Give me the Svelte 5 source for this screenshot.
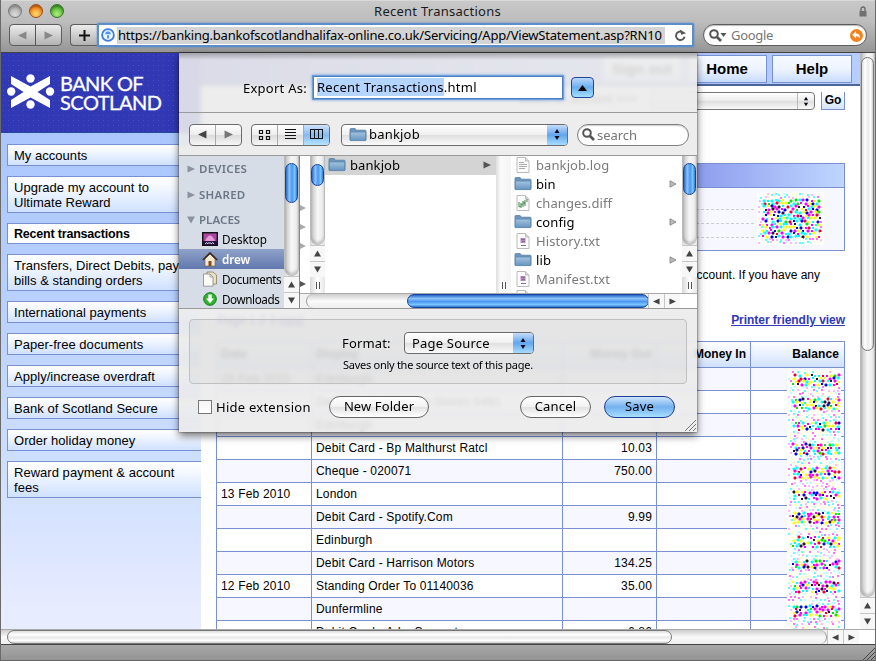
<script>
  const menu = [
    ['My accounts'],
    ['Upgrade my account to', 'Ultimate Reward'],
    ['Recent transactions'],
    ['Transfers, Direct Debits, pay', 'bills & standing orders'],
    ['International payments'],
    ['Paper-free documents'],
    ['Apply/increase overdraft'],
    ['Bank of Scotland Secure'],
    ['Order holiday money'],
    ['Reward payment & account', 'fees']
  ];

  const rows = [
    ['15 Feb 2010', 'Edinburgh', ''],
    ['', 'Debit Card - Amazon Stores 5491', ''],
    ['', 'Edinburgh', ''],
    ['', 'Debit Card - Bp Malthurst Ratcl', '10.03'],
    ['', 'Cheque - 020071', '750.00'],
    ['13 Feb 2010', 'London', ''],
    ['', 'Debit Card - Spotify.Com', '9.99'],
    ['', 'Edinburgh', ''],
    ['', 'Debit Card - Harrison Motors', '134.25'],
    ['12 Feb 2010', 'Standing Order To 01140036', '35.00'],
    ['', 'Dunfermline', ''],
    ['', 'Debit Card - Arke Support', '6.86']
  ];

  const files = [
    ['bankjob.log', 'log'],
    ['bin', 'folder'],
    ['changes.diff', 'diff'],
    ['config', 'folder'],
    ['History.txt', 'txt'],
    ['lib', 'folder'],
    ['Manifest.txt', 'txt'],
    ['PostInstall.txt', 'txt']
  ];

  // Halftone-like speckle used to mask private figures
  const strong = ['#00ffff', '#ff00ff', '#ffff00', '#00ffff', '#ff00ff', '#ffff00', '#0000f0', '#f00030', '#10e010', '#00ffff', '#ff00ff', '#ffff00', '#00ffff', '#ff00ff', '#1010c0', '#301030'];
  const weak = ['#ffb8ff', '#b8ffff', '#ffffc0', '#ff70ff', '#60ffff', '#ffffe0'];
  function speckle(w, h, dense, seed) {
    let s = seed;
    const rnd = () => (s = (s * 16807) % 2147483647) / 2147483647;
    const dots = [];
    for (let row = 0, y = 1; y < h - 2; y += 3, row++) {
      for (let x = 1 + (row % 2) * 2; x < w - 2; x += 4) {
        const on = dense(x, y);
        if (rnd() < (on ? 0.06 : 0.1)) continue;
        const set = on ? strong : weak;
        dots.push({
          x: Math.min(w - 3, x + Math.floor(rnd() * 2)),
          y: Math.min(h - 3, y + Math.floor(rnd() * 2)),
          big: on && rnd() < 0.55,
          c: set[Math.floor(rnd() * set.length)]
        });
      }
    }
    return dots;
  }
  const boxDots = speckle(67, 53, (x, y) => x > 4 && x < 62 && y > 4 && y < 46, 4711);
  const colDots = speckle(54, 262, (x, y) => x > 4 && y % 23 > 3 && y % 23 < 15, 977);
</script>

{#snippet tri(dir, size = 8, fill = '#444')}
  <svg width={size} height={size} viewBox="0 0 8 8" class="tri">
    {#if dir === 'l'}<path d="M7.5 0.5v7L0 4z" {fill} />
    {:else if dir === 'r'}<path d="M.5 .5v7L8 4z" {fill} />
    {:else if dir === 'u'}<path d="M0 7.500h8L4 .5z" {fill} />
    {:else}<path d="M0 .5h8L4 7.500z" {fill} />{/if}
  </svg>
{/snippet}

{#snippet vscroll(start, thumb, color, grip)}
  <div class="vs">
    <div class="vtrack">
      <div class="vgap" style="height:{start}px"></div>
      <div class="vthumb {color}" style="height:{thumb}px"></div>
    </div>
    <div class="sbtn">{@render tri('u', 7)}</div>
    <div class="sbtn">{@render tri('d', 7)}</div>
    {#if grip}<div class="grip"><i></i><i></i></div>{/if}
  </div>
{/snippet}

{#snippet folder()}
  <svg width="18" height="16" viewBox="0 0 18 16">
    <defs><linearGradient id="fg" x2="0" y2="1"><stop offset="0" stop-color="#a5c4e0" /><stop offset="1" stop-color="#6594bf" /></linearGradient></defs>
    <path d="M1 13V2.500q0-.9.9-.9h4.300l1.200 1.600h8.700q.9 0 .9.900V13z" fill="#6f97bb" stroke="#527da5" stroke-width=".8" />
    <path d="M1.300 5h15.400v8.600H1.300z" fill="url(#fg)" stroke="#5b87ae" stroke-width=".8" />
  </svg>
{/snippet}

{#snippet lens(arrow)}
  <svg width={arrow ? 18 : 13} height="13" viewBox="0 0 {arrow ? 18 : 13} 13">
    <circle cx="5" cy="5" r="3.800" fill="none" stroke="#555" stroke-width="2" />
    <path d="M8 8l4 4" stroke="#555" stroke-width="2.600" />
    {#if arrow}<path d="M11.500 4h6l-3 4z" fill="#555" />{/if}
  </svg>
{/snippet}

{#snippet stepper()}
  <span class="step"><svg width="8" height="13" viewBox="0 0 8 13"><path d="M4 1L6.500 5h-5zM4 12L1.500 8h5z" fill="#080818" /></svg></span>
{/snippet}

{#snippet dots(w, h, list)}
  <svg class="speckle" width={w} height={h} viewBox="0 0 {w} {h}" shape-rendering="crispEdges">
    <rect width={w} height={h} fill="#fff" />
    {#each list as d}
      {#if d.big}<path d="M{d.x} {d.y - 1}h2v1h1v2h-1v1h-2v-1h-1v-2h1z" fill={d.c} opacity=".45" />{/if}
      <rect x={d.x} y={d.y} width="2" height="2" fill={d.c} />
    {/each}
  </svg>
{/snippet}

<div class="window">
  <div class="chrome">
    <div class="titlebar">
      <div class="lights"><b class="grey"></b><b class="amber"></b><b class="green"></b></div>
      <span class="title">Recent Transactions</span>
      <svg class="lock" width="8" height="11" viewBox="0 0 8 11"><path d="M2 5V3a2 2 0 0 1 4 0v2" fill="none" stroke="#666" stroke-width="1.300" /><rect x=".5" y="5" width="7" height="5.500" rx=".6" fill="#707070" /></svg>
    </div>
    <div class="toolbar">
      <div class="tb pair"><span>{@render tri('l', 9, '#888')}</span><span>{@render tri('r', 9, '#888')}</span></div>
      <div class="tb plus"><svg width="11" height="11" viewBox="0 0 11 11"><path d="M5.500 0v11M0 5.500h11" stroke="#111" stroke-width="2" /></svg></div>
      <div class="url">
        <svg width="14" height="14" viewBox="0 0 14 14"><circle cx="7" cy="7" r="5.900" fill="#eaf4ff" stroke="#3b7bea" stroke-width="1.800" /><path d="M4.300 6.200V4.800Q7 1.600 9.700 4.800v1.400zM6 7.200h2v3.200H6z" fill="#4e97f5" /></svg>
        <span class="addr">https://banking.bankofscotlandhalifax-online.co.uk/Servicing/App/ViewStatement.asp?RN10</span>
        <svg class="reload" width="13" height="13" viewBox="0 0 13 13"><path d="M10.500 7.800A4.300 4.300 0 1 1 8 2.800" fill="none" stroke="#555" stroke-width="1.900" /><path d="M6.500 0v5.500h5z" fill="#555" transform="rotate(-18 8 3)" /></svg>
      </div>
      <div class="google">
        {@render lens(true)}<span>Google</span>
        <svg width="13" height="13" viewBox="0 0 13 13"><circle cx="6.500" cy="6.500" r="6.500" fill="#f58220" /><path d="M6 2.200v2.200q4.300 0 4 5-1-2.300-4-2.200v2.200L2.200 5.800z" fill="#fff" /></svg>
      </div>
    </div>
  </div>

  <div class="viewport">
    <div class="page">
      <div class="left">
        <div class="brand">
          <svg width="48" height="36" viewBox="0 0 48 36" fill="#fff">
            <path d="M4 2l19.500 10.500L43 2v8L30.500 18 43 26v8L23.500 23.500 4 34v-8l12.500-8L4 10z" />
            <circle cx="23.500" cy="4.500" r="4.200" /><circle cx="23.500" cy="30.500" r="4.200" /><circle cx="4.200" cy="17.500" r="4.200" /><circle cx="43" cy="17.500" r="4.200" />
          </svg>
          <div class="bname"><div class="b1">BANK OF</div><div class="b2">SCOTLAND</div></div>
        </div>
        <div class="menu">
          {#each menu as lines, i}
            <div class="item" class:active={i === 2}>{#each lines as l}<div>{l}</div>{/each}</div>
          {/each}
        </div>
      </div>
      <div class="main">
        <div class="topnav"><span>Sign out</span><span>Home</span><span>Help</span></div>
        <div class="jump">
          <span class="jl">Select an account &gt;&gt;&gt;</span>
          <span class="select">{@render stepper()}</span><span class="go">Go</span>
        </div>
        <div class="infobox">
          <div class="ihead"></div>
          <div class="ibody"><div class="dash"><i></i><i></i><i></i></div>{@render dots(67, 53, boxDots)}</div>
        </div>
        <div class="note">The list below shows the recent transactions on your account. If you have any</div>
        <div class="links"><span class="pages">Page 1 2 3 <u>next</u></span><span class="print">Printer friendly view</span></div>
        <div class="tablewrap">
          <div class="tr th"><span>Date</span><span>Display</span><span>Money Out</span><span>Money In</span><span>Balance</span></div>
          {#each rows as r, i}
            <div class="tr" class:odd={i % 2 === 0}><span>{r[0]}</span><span>{r[1]}</span><span>{r[2]}</span><span></span><span></span></div>
          {/each}
          <div class="mask">{@render dots(54, 262, colDots)}</div>
        </div>
      </div>
    </div>
    <div class="pagescroll">{@render vscroll(4, 294, 'pale', false)}</div>
  </div>

  <div class="hbar">
    <div class="htrack"><div class="hthumb pale"></div></div>
    <div class="sbtn">{@render tri('l', 7)}</div>
    <div class="sbtn">{@render tri('r', 7)}</div>
    <div class="corner"></div>
  </div>
  <div class="status"><svg width="12" height="12" viewBox="0 0 12 12"><path d="M0 12L12 0M4 12l8-8M8 12l4-4" stroke="#444" /></svg></div>

  <div class="sheet">
    <div class="name">
      <label for="fn">Export As:</label>
      <div class="field" id="fn"><mark>Recent Transactions</mark>.html</div>
      <div class="toggle"><svg width="9" height="6" viewBox="0 0 9 6"><path d="M0 6h9L4.500 0z" /></svg></div>
    </div>
    <div class="tools">
      <div class="seg"><span>{@render tri('l', 9)}</span><span>{@render tri('r', 9, '#777')}</span></div>
      <div class="seg views">
        <span><svg width="13" height="12" viewBox="0 0 13 12" fill="none" stroke="#111" stroke-width="1.200"><path d="M1.500 1.500h3v3h-3zM8.500 1.500h3v3h-3zM1.500 7.500h3v3h-3zM8.500 7.500h3v3h-3z" /></svg></span>
        <span><svg width="11" height="11" viewBox="0 0 11 11" stroke="#111" shape-rendering="crispEdges"><path d="M0 .5h11M0 3.500h11M0 6.500h11M0 9.500h11" /></svg></span>
        <span class="on"><svg width="13" height="11" viewBox="0 0 13 11" fill="none" stroke="#111" shape-rendering="crispEdges"><path d="M.5 .5h12v9H.5zM4.500 .5v9M8.500 .5v9" /></svg></span>
      </div>
      <div class="popup dir">{@render folder()}<span>bankjob</span>{@render stepper()}</div>
      <div class="find">{@render lens(false)}<span>search</span></div>
    </div>

    <div class="browser">
      <div class="places">
        <div class="group">{@render tri('r', 8, '#8a939f')}DEVICES</div>
        <div class="group">{@render tri('r', 8, '#8a939f')}SHARED</div>
        <div class="group last">{@render tri('d', 8, '#8a939f')}PLACES</div>
        <div class="place">
          <svg width="16" height="14" viewBox="0 0 16 14"><rect x=".5" y=".5" width="15" height="13" fill="#28103a" stroke="#111" /><rect x="1.500" y="1.500" width="13" height="7.500" fill="#a8489c" /><path d="M3 9Q8-2 13 9z" fill="#e79ad8" /><path d="M3 12q2-3 3 0M9 12q2-3 3 0M6 11h3" stroke="#d8e0ff" fill="none" /></svg>Desktop
        </div>
        <div class="place sel">
          <svg width="16" height="15" viewBox="0 0 16 15"><path d="M3 7l5-5 5 5v7H3z" fill="#f5e9cf" stroke="#7c5a3a" stroke-width=".6" /><path d="M.8 8L8 1l7.200 7" fill="none" stroke="#3c2a20" stroke-width="1.700" /><path d="M6.500 9h3v5h-3z" fill="#8a4a20" /></svg>drew
        </div>
        <div class="place doc">
          <svg width="16" height="16" viewBox="0 0 16 16"><path d="M5 1h6l3.500 3v9H5z" fill="#e9e0c6" stroke="#8b7d5a" stroke-width=".8" /><path d="M1.500 3H8l3 3v9.200H1.500z" fill="#fbfbf6" stroke="#888" stroke-width=".8" /><path d="M8 3v3h3" fill="none" stroke="#888" stroke-width=".7" /></svg>Documents
        </div>
        <div class="place doc">
          <svg width="16" height="16" viewBox="0 0 16 16"><circle cx="8" cy="8" r="6.300" fill="#2fb52c" stroke="#137a17" /><path d="M6.300 3.500h3.400v4H12l-4 4.700-4-4.700h2.300z" fill="#fff" /></svg>Downloads
        </div>
      </div>
      {@render vscroll(7, 40, 'aqua', false)}
      <div class="columns">
        <div class="colrow">
          <div class="stub"><b></b><b></b><b></b><b class="hi"></b></div>
          {@render vscroll(8, 22, 'aqua', true)}
          <div class="colA"><div class="frow cur">{@render folder()}<span>bankjob</span>{@render tri('r', 8, '#555')}</div></div>
          <div class="divider"><div class="grip"><i></i><i></i></div></div>
          <div class="colB">
            {#each files as [n, t]}
              <div class="frow" class:dim={t !== 'folder'}>
                {#if t === 'folder'}{@render folder()}{:else}
                  <svg width="18" height="16" viewBox="0 0 18 16"><path d="M3 .5h8.500l3.500 3.500v11.500H3z" fill="#fbfbfb" stroke="#bbb" /><path d="M11.500 .5V4H15" fill="#ddd" stroke="#bbb" />
                    {#if t === 'log'}<path d="M5 5.500h5M5 7.500h8M5 9.500h8M5 11.500h6" stroke="#aaa" />
                    {:else if t === 'diff'}<path d="M5 7v5M7 8v5M9 6v6M11 5v6M13 4v3M5 12l6-5" fill="none" stroke="#5a9a66" stroke-width="1.200" />
                    {:else}<path d="M6.500 5h5v5h-5z" fill="#b58ac0" /><path d="M7 6.500h4M8 8.500h3M7 12.500h5" stroke="#8d6a98" />{/if}
                  </svg>
                {/if}
                <span>{n}</span>{#if t === 'folder'}<svg class="tri" width="8" height="8" viewBox="0 0 8 8"><path d="M1 .8v6.400L7 4z" fill="#bbb" stroke="#888" stroke-width=".9" /></svg>{/if}
              </div>
            {/each}
          </div>
          {@render vscroll(7, 32, 'aqua', true)}
        </div>
        <div class="hsc">
          <div class="htrack"><div class="hthumb aqua"></div></div>
          <div class="sbtn">{@render tri('l', 7)}</div>
          <div class="sbtn">{@render tri('r', 7)}</div>
          <div class="corner"></div>
        </div>
      </div>
    </div>

    <div class="format">
      <div class="frm"><span>Format:</span><div class="popup src"><span>Page Source</span>{@render stepper()}</div></div>
      <div class="hint">Saves only the source text of this page.</div>
    </div>
    <div class="actions">
      <i class="check"></i><span class="hide">Hide extension</span>
      <span class="btn nf">New Folder</span><span class="btn ca">Cancel</span><span class="btn save">Save</span>
    </div>
    <svg class="resize" width="11" height="11" viewBox="0 0 11 11"><path d="M0 11L11 0M4 11l7-7M8 11l3-3" stroke="#777" /></svg>
  </div>
</div>

<style>
  :global(body) { background: #fff; }
  .window, .window :global(*) { box-sizing: border-box; }
  .window {
    width: 876px; height: 661px; position: relative; overflow: hidden;
    display: flex; flex-direction: column;
    border-left: 1px solid #6a6a6a; border-right: 1px solid #6a6a6a; 
    font: 13px/16px "Noto Sans", "Open Sans", sans-serif; color: #000; white-space: nowrap;
  }
  svg { display: block; flex: none; }
  .chrome { height: 53px; background: linear-gradient(#c8c8c8, #bdbdbd 40%, #969696); border-bottom: 1px solid #444; flex: none; border-top: 1px solid #d8d8d8; }
  .titlebar { height: 20px; display: flex; align-items: center; padding: 0 8px 0 7px; }
  .lights { display: flex; gap: 7px; width: 120px; }
  .lights b { width: 14px; height: 14px; border-radius: 50%; border: 1px solid #777; box-shadow: inset 0 2px 2px #0003; }
  .grey { background: radial-gradient(circle at 50% 80%, #ddd, #aaa 70%); }
  .lights .amber { background: radial-gradient(circle at 50% 75%, #ffe070, #f38a20 60%, #b84808); border-color: #a04a18; }
  .lights .green { background: radial-gradient(circle at 50% 75%, #b0f080, #58b838 60%, #2a7a18); border-color: #3d6e2a; }
  .title { flex: 1; text-align: center; letter-spacing: .25px; color: #1a1a1a; }
  .lock { margin-left: 112px; }
  .toolbar { display: flex; align-items: center; padding: 1px 8px 0 8px; height: 27px; }
  .tb { height: 22px; border: 1px solid #5c5c5c; border-radius: 4px; background: linear-gradient(#ececec, #cfcfcf 50%, #b2b2b2); display: flex; align-items: center; justify-content: center; }
  .pair { width: 53px; }
  .pair span { flex: 1; height: 20px; display: grid; place-items: center; }
  .pair span + span { border-left: 1px solid #555; }
  .plus { width: 27px; margin-left: 8px; border-radius: 4px 0 0 4px; border-right: 0; }
  .url { width: 597px; height: 24px; border: 2px solid #5b8ecb; border-radius: 2px; background: #fff; box-shadow: 0 0 2px #4a86d0; display: flex; align-items: center; padding-left: 2px; }
  .addr { background: #d4d4d4; margin-left: 2px; width: 548px; line-height: 17px; padding-left: 1px; letter-spacing: -.195px; }
  .reload { margin-left: 9px; }
  .google { width: 164px; height: 22px; margin-left: 9px; background: #fff; border: 1px solid #5c5c5c; border-radius: 11px; display: flex; align-items: center; padding: 0 3px 0 5px; box-shadow: inset 0 1px 1px #0004; color: #777; }
  .google span { flex: 1; margin-left: 4px; letter-spacing: -.3px; }

  .viewport { height: 576px; display: flex; flex: none; overflow: hidden; }
  .page { width: 859px; display: flex; background: #fff; overflow: hidden; font: 12px/15px "Liberation Sans", Arial, sans-serif; }
  .left { width: 200px; flex: none; background: linear-gradient(#aac6fc 80px, #b8d0ff 240px, #cfe0ff 420px, #dde6ff 500px, #e8ecff 560px); }
  .brand { height: 80px; background: radial-gradient(circle, #4a48c8 .6px, transparent .9px) 0 0/5px 5px, #3038b4; border-bottom: 1px solid #28489c; display: flex; padding: 21px 0 0 6px; }
  .bname { font: 20px/20px Lato, sans-serif; color: #fff; margin: -1px 0 0 5px; -webkit-text-stroke: .3px #fff; }
  .b1 { letter-spacing: -.6px; }
  .b2 { letter-spacing: -.5px; line-height: 18px; }
  .menu { padding: 11px 0 0 6px; display: flex; flex-direction: column; gap: 10px; font-size: 13px; }
  .item { border: 1px solid #7991d3; border-right: 0; padding: 3px 0 2px 6px; background: linear-gradient(#fff, #f4f8ff 30%, #cfe1ff); letter-spacing: .03px; }
  .item.active { background: #fff; font-weight: bold; padding: 3px 0 1px 6px; font-size: 12.500px; letter-spacing: -.2px; }
  .main { width: 659px; padding-right: 15px; flex: none; }
  .topnav { height: 33px; margin-right: -15px; background: linear-gradient(90deg, #4450c0, #98a8ec 50%, #b5cdff 90%); border-bottom: 2px solid #4a6599; display: flex; gap: 5px; justify-content: flex-end; padding: 2px 8px 0 0; }
  .topnav span { width: 80px; height: 28px; border: 1px solid #7991d3; background: linear-gradient(#f6faff, #eef4ff 50%, #c8dcff); font: bold 15px/26px "Liberation Sans", Arial, sans-serif; text-align: center; }
  .jump { height: 18px; margin: 6px 0 0; display: flex; justify-content: flex-end; }
  .jl { margin-right: 13px; }
  .select { width: 165px; height: 18px; border: 1px solid #777; border-radius: 4px; background: linear-gradient(#fff, #ececec 48%, #dedede 52%, #fafafa); display: flex; justify-content: flex-end; }
  .select .step { background: none; border-left: 1px solid #bbb; width: 17px; height: 16px; }
  .select .step svg { height: 11px; }
  .go { width: 24px; margin-left: 6px; border: 1px solid #7991d3; border-top: 0; background: linear-gradient(#fff, #d4e4ff); font-weight: bold; text-align: center; line-height: 16px; }
  .infobox { margin: 53px 0 0 15px; height: 88px; border: 1px solid #7991d3; background: #f7f7ff; }
  .ihead { height: 24px; background: linear-gradient(90deg, #6a78dc 40%, #8d9cee 76%, #bfd6ff); border-bottom: 1px solid #7991d3; }
  .ibody { display: flex; justify-content: flex-end; padding: 4px 20px 0 0; }
  .dash { flex: 1; margin-right: 3px; }
  .dash i { display: block; height: 14px; border-bottom: 1px dashed #ccccd6; }
  .dash i:first-child { height: 18px; }
  .note { margin: 17px 25px 0 0; text-align: right; height: 15px; }
  .links { display: flex; justify-content: space-between; margin: 30px 0 0 16px; height: 15px; }
  .print { font-weight: bold; color: #3238b8; text-decoration: underline; letter-spacing: -.04px; }
  .pages { color: #3238b8; font-weight: bold; }
  .tablewrap { position: relative; margin: 13px 0 0 15px; border: 1px solid #7991d3; border-bottom: 0; height: 288px; overflow: hidden; }
  .tr { height: 23px; display: flex; border-bottom: 1px solid #7991d3; line-height: 22px; }
  .tr.odd { background: #f7f7ff; }
  .tr span { width: 94px; padding: 0 4px; border-left: 1px solid #7991d3; text-align: right; overflow: hidden; }
  .tr:not(.th) span { letter-spacing: .18px; }
  .tr span:first-child { border-left: 0; text-align: left; }
  .tr span:nth-child(2) { width: 251px; text-align: left; }
  .th { height: 26px; line-height: 25px; font-weight: bold; background: linear-gradient(#fff, #e8f0ff 50%, #cfe0ff); }
  .th span:last-child { letter-spacing: .1px; padding-right: 5px; }
  .mask { position: absolute; right: 3px; top: 28px; }

  .pagescroll { width: 15px; display: flex; }
  .vs { width: 15px; display: flex; flex-direction: column; flex: none; background: linear-gradient(90deg, #d8d8d8, #fff 50%, #e6e6e6); }
  .vtrack { flex: 1; border-radius: 0 0 8px 8px; border: solid #bbb; border-width: 0 1px 1px; background: linear-gradient(90deg, #c2c2c2, #f6f6f6 50%, #ececec); box-shadow: inset 0 -2px 3px #0003; }
  .vthumb { border-radius: 7px; }
  .vthumb.aqua { border: 1px solid #16439c; background: linear-gradient(90deg, #2468cc, #8fc3fa 30%, #4a96f0 55%, #7cc8ff 80%, #2d72d4); }
  .vthumb.pale { border: 1px solid #7a7a7a; background: linear-gradient(90deg, #ddd, #fff 30%, #e9e9e9 55%, #fff 80%, #c8c8c8); }
  .sbtn { width: 15px; height: 16px; display: grid; place-items: center; border-top: 1px solid #c6c6c6; background: #f7f7f7; flex: none; }
  .grip { height: 16px; display: flex; gap: 2px; justify-content: center; align-items: center; }
  .grip i { width: 1px; height: 7px; background: #555; }

  .hbar { height: 15px; display: flex; flex: none; background: #f0f0f0; border-top: 1px solid #aaa; }
  .htrack { width: 826px; background: linear-gradient(#ccc, #fafafa 50%, #eee); border-radius: 0 8px 8px 0; border-right: 1px solid #999; flex: none; }
  .hthumb { border-radius: 8px; height: 14px; }
  .hbar .hthumb { margin-left: 6px; width: 665px; }
  .hthumb.pale { border: 1px solid #777; background: linear-gradient(#ddd, #fff 30%, #e8e8e8 55%, #fff 80%, #ccc); }
  .hthumb.aqua { border: 1px solid #16439c; background: linear-gradient(#2468cc, #8fc3fa 30%, #4a96f0 55%, #7cc8ff 80%, #2d72d4); }
  .hbar .sbtn, .hsc .sbtn { height: 14px; width: 16px; border-top: 0; border-left: 1px solid #c6c6c6; }
  .corner { flex: 1; background: #fff; }
  .status { height: 17px; background: linear-gradient(#a8a8a8, #949494); border-top: 1px solid #444; border-bottom: 1px solid #666; display: flex; justify-content: flex-end; align-items: flex-end; }

  .sheet { position: absolute; left: 178px; top: 53px; width: 518px; height: 379px; background: rgba(235, 235, 235, .9); backdrop-filter: blur(2px); box-shadow: 0 4px 8px #0008, 0 0 2px #0009; display: flex; flex-direction: column; }
  .sheet::before { content: ''; position: absolute; inset: 0 0 auto; height: 7px; background: linear-gradient(#0004, transparent); }
  .name { height: 60px; border-bottom: 1px solid #9a9a9a; display: flex; align-items: center; padding: 10px 0 0 64px; flex: none; }
  .name label { letter-spacing: .25px; width: 70px; }
  .field { width: 250px; height: 23px; background: #fff; border: 1px solid #4c82c4; box-shadow: 0 0 0 1px #6f9fd8, 0 0 3px 1px #6fa0e0; line-height: 21px; padding-left: 3px; letter-spacing: .25px; }
  mark { background: #b4d5ff; color: inherit; display: inline-block; line-height: 18px; }
  .toggle { width: 23px; height: 21px; margin-left: 8px; border: 1px solid #22459a; border-radius: 4px; background: linear-gradient(#b8d8fa, #6aaef0 50%, #a4e0ff); display: grid; place-items: center; }
  .tools { height: 42px; display: flex; align-items: center; padding: 1px 0 0 10px; flex: none; }
  .seg { width: 53px; height: 22px; display: flex; border: 1px solid #6c6c6c; border-radius: 4px; background: linear-gradient(#fdfdfd, #eee 48%, #dcdcdc 52%, #f6f6f6); overflow: hidden; }
  .seg span { flex: 1; display: grid; place-items: center; }
  .seg span + span { border-left: 1px solid #aaa; }
  .seg .on { background: linear-gradient(#cfe3fb, #84b9f2 50%, #b4e4ff); }
  .views { width: 79px; margin-left: 9px; }
  .popup { height: 22px; border: 1px solid #6c6c6c; border-radius: 4px; background: linear-gradient(#fff, #f0f0f0 48%, #e0e0e0 52%, #fafafa); display: flex; align-items: center; padding-left: 7px; overflow: hidden; letter-spacing: .2px; }
  .dir { width: 227px; margin-left: 11px; }
  .popup > span:not(.step) { flex: 1; margin-left: 2px; padding-bottom: 1px; }
  .src > span:not(.step) { margin-left: 0; }
  .step { width: 20px; height: 20px; display: grid; place-items: center; background: linear-gradient(#c4dcfa, #62a6ee 50%, #a6dcff); flex: none; }
  .find { width: 112px; height: 22px; margin-left: 9px; border: 1px solid #808080; border-radius: 11px; background: #fff; display: flex; align-items: center; padding-left: 4px; color: #777; box-shadow: inset 0 1px 1px #0003; letter-spacing: -.05px; }
  .find span { margin-left: 2px; }

  .browser { height: 154px; border: solid #9a9a9a; border-width: 1px 0; display: flex; flex: none; background: #fff; overflow: hidden; }
  .places { width: 105px; background: #d6dde6; font-size: 12px; overflow: hidden; flex: none; }
  .group { height: 26px; display: flex; align-items: center; gap: 4px; padding-left: 8px; font-weight: 600; font-size: 11.500px; letter-spacing: .25px; color: #6b7786; }
  .group.last { height: 21px; padding-top: 3px; letter-spacing: .05px; }
  .place { height: 20px; display: flex; align-items: center; padding-left: 23px; gap: 4px; font-size: 11.700px; letter-spacing: -.1px; }
  .place.sel { background: linear-gradient(#90a2c8, #6078ae); color: #fff; font-weight: 600; }
  .place.doc { letter-spacing: -.42px; }
  .columns { width: 398px; display: flex; flex-direction: column; border-left: 1px solid #888; flex: none; }
  .colrow { height: 137px; display: flex; overflow: hidden; flex: none; }
  .colrow .vs { height: 137px; }
  .stub { width: 10px; padding-top: 49px; flex: none; }
  .stub b { display: block; margin-bottom: 13px; width: 6px; height: 6px; background: #aaa; clip-path: polygon(0 0, 100% 50%, 0 100%); }
  .stub b.hi { margin-top: 32px; background: #555; }
  .colA { width: 171px; flex: none; }
  .frow { height: 19px; display: flex; align-items: center; padding: 0 5px 1px 3px; letter-spacing: .1px; }
  .frow span { flex: 1; margin-left: 4px; }
  .frow.dim { color: #7b7b7b; }
  .frow.cur { background: #d4d4d4; }
  .divider { width: 15px; background: linear-gradient(90deg, #ddd, #fafafa 30%, #f4f4f4); display: flex; flex-direction: column; justify-content: flex-end; flex: none; }
  .colB { width: 171px; flex: none; overflow: hidden; }
  .hsc { height: 15px; display: flex; border-top: 1px solid #aaa; background: #f2f2f2; }
  .hsc .htrack { width: 342px; margin-left: 6px; border-radius: 8px; border-left: 1px solid #999; border-right: 0; padding-left: 100px; }
  .hsc .hthumb { width: 242px; }

  .format { margin: 10px 10px 0; height: 65px; border: 1px solid #c0c0c0; border-radius: 4px; background: #00000009; padding: 12px 0 0 152px; flex: none; }
  .frm { display: flex; align-items: center; gap: 15px; letter-spacing: .15px; }
  .frm > span { width: 47px; }
  .src { width: 130px; }
  .hint { font-size: 11px; line-height: 14px; margin-top: 4px; padding-left: 1px; letter-spacing: -.27px; }
  .actions { display: flex; align-items: center; padding: 12px 0 0 19px; flex: none; letter-spacing: .2px; }
  .check { width: 14px; height: 14px; border: 1px solid #777; background: linear-gradient(#f4f4f4, #fff); }
  .hide { margin-left: 4px; width: 113px; letter-spacing: .25px; }
  .btn { height: 22px; border: 1px solid #666; border-radius: 11px; background: linear-gradient(#fff, #f2f2f2 48%, #e2e2e2 52%, #fff); text-align: center; line-height: 19px; }
  .nf { width: 100px; letter-spacing: .1px; }
  .ca { width: 71px; margin-left: 91px; }
  .save { width: 71px; margin-left: 13px; border-color: #1c3c94; background: linear-gradient(#cfe4fc, #74b0f0 50%, #a8e0ff); }
  .resize { position: absolute; right: 1px; bottom: 1px; }
</style>
